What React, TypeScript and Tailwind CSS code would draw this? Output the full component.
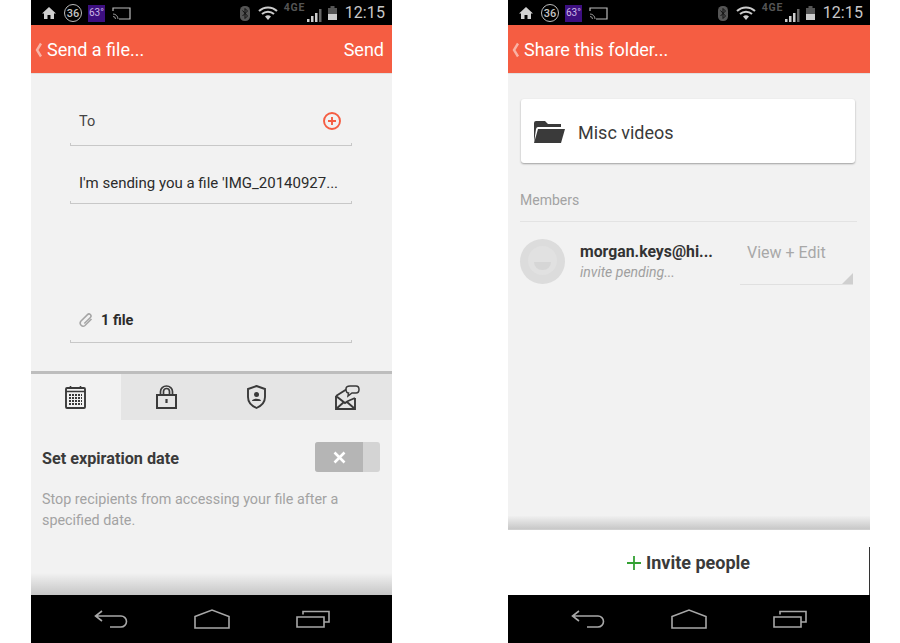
import React from "react";

function StatusBar() {
  return (
    <div className="h-[25px] bg-black flex items-center text-[#c4c4c4] shrink-0 pl-[10px] pr-[7px] pt-[1px]">
      <svg width="16" height="14" viewBox="0 0 16 14" className="mr-[7px]"><path d="M8 1 L15 7.5 H13 V13 H9.5 V9 H6.5 V13 H3 V7.5 H1 Z" fill="#d0d0d0" /></svg>
      <div className="w-[18px] h-[18px] rounded-full border border-[#bbb] flex items-center justify-center text-[11px] font-medium mr-[6px] leading-none">36</div>
      <div className="w-[17px] h-[17px] bg-[#3d0f80] text-[#c9b6e6] text-[10px] flex items-center justify-center mr-[7px] leading-none">63°</div>
      <svg width="19" height="15" viewBox="0 0 19 15" className="mr-auto"><path d="M1 5 V2 H18 V13 H7" fill="none" stroke="#bbb" strokeWidth="1.2" /><path d="M1 8 A5 5 0 0 1 6 13 M1 10.5 A2.5 2.5 0 0 1 3.5 13" fill="none" stroke="#999" strokeWidth="1" /></svg>
      <svg width="12" height="17" viewBox="0 0 12 17" className="mr-[7px]"><rect x="1" y="1" width="10" height="15" rx="4.5" fill="#555" /><path d="M3.5 5.5 L8.5 11 L6 13.5 V3.5 L8.5 6 L3.5 11" fill="none" stroke="#111" strokeWidth="1" /></svg>
      <svg width="20" height="15" viewBox="0 0 20 15" className="mr-[6px]"><path d="M1 5 A13 13 0 0 1 19 5" fill="none" stroke="#ccc" strokeWidth="2" /><path d="M4 8 A9 9 0 0 1 16 8" fill="none" stroke="#ccc" strokeWidth="2" /><path d="M7 10.5 A4.5 4.5 0 0 1 13 10.5 L10 14 Z" fill="#ccc" /></svg>
      <div className="relative w-[39px] h-[20px] mr-[4px]">
        <span className="absolute left-0 top-0 text-[10.5px] leading-none font-bold tracking-[0.8px] text-[#555]">4GE</span>
        <svg width="17" height="15" viewBox="0 0 17 15" className="absolute right-0 bottom-0"><path d="M1 14 H3.5 V11 H1 Z M5 14 H7.5 V8 H5 Z M9 14 H11.5 V5 H9 Z" fill="#ccc" /><path d="M13 14 H15.5 V1 H13 Z" fill="#666" /></svg>
      </div>
      <svg width="11" height="16" viewBox="0 0 11 16" className="mr-[7px]"><path d="M1 3 H3.5 V1 H7.5 V3 H10 V15 H1 Z" fill="#555" /><path d="M1 9 H10 V15 H1 Z" fill="#ccc" /></svg>
      <span className="text-[16px] tracking-[0.1px] leading-none text-[#c8c8c8]">12:15</span>
    </div>
  );
}

function Header({ title, action }: { title: string; action?: string }) {
  return (
    <div className="h-[49px] bg-[#f55d42] flex items-center text-white text-[18px] shrink-0 pl-[4px] pr-[8px] pt-[1px] border-b border-[#e0e0e0]">
      <svg width="8" height="16" viewBox="0 0 8 16" className="mr-[4px]"><path d="M6 1.5 L2 8 L6 14.5" fill="none" stroke="#f9b3a5" strokeWidth="2.4" /></svg>
      <span>{title}</span>
      {action && <span className="ml-auto">{action}</span>}
    </div>
  );
}

function NavBar() {
  return (
    <div className="h-[48px] bg-black flex items-center justify-center gap-[66px] shrink-0">
      <svg width="34" height="18" viewBox="0 0 34 18"><path d="M8 1 L1.5 6 L8 11 M1.5 6 H27 A5.5 5.5 0 0 1 27 17 H16" fill="none" stroke="#a8a8a8" strokeWidth="1.6" /></svg>
      <svg width="36" height="20" viewBox="0 0 36 20"><path d="M1 7.5 L18 1 L35 7.5 V19 H1 Z" fill="none" stroke="#a8a8a8" strokeWidth="1.6" /></svg>
      <svg width="34" height="18" viewBox="0 0 34 18"><path d="M1 7 H28 V17 H1 Z" fill="none" stroke="#a8a8a8" strokeWidth="1.6" /><path d="M7 4.5 V1.5 H33 V12 H28" fill="none" stroke="#a8a8a8" strokeWidth="1.6" /></svg>
    </div>
  );
}

function Underline() {
  return <div className="h-[3px] border-x border-b border-[#c8c8c8]" />;
}

function SendPhone() {
  return (
    <div className="w-[361px] h-[643px] flex flex-col shrink-0 bg-[#f2f2f2]">
      <StatusBar />
      <Header title="Send a file..." action="Send" />
      <div className="flex-1 flex flex-col min-h-0">
        <div className="pl-[39px] pr-[40px] pt-[36px]">
          <div className="h-[24px] flex items-center justify-between pl-[9px] pr-[11px] text-[14.5px] text-[#444]">
            <span>To</span>
            <svg width="18" height="18" viewBox="0 0 18 18" className="-mt-[2px]"><circle cx="9" cy="9" r="8" fill="none" stroke="#f55d42" strokeWidth="1.9" /><path d="M9 5 V13 M5 9 H13" stroke="#f55d42" strokeWidth="1.9" /></svg>
          </div>
          <div className="mt-[9px]"><Underline /></div>
          <div className="mt-[25px] h-[24px] flex items-center pl-[9px] text-[15px] text-[#2b2b2b] whitespace-nowrap">I'm sending you a file 'IMG_20140927...</div>
          <div className="mt-[6px]"><Underline /></div>
          <div className="mt-[105px] h-[24px] flex items-center pl-[8px] gap-[7px]">
            <svg width="16" height="18" viewBox="0 0 16 18"><path d="M13.5 7 L7 13.5 A3 3 0 0 1 2.8 9.3 L9.5 2.6 A2 2 0 0 1 12.4 5.4 L6.3 11.5" fill="none" stroke="#a5a5a5" strokeWidth="1.5" /></svg>
            <span className="text-[14.5px] font-bold text-[#2b2b2b]">1 file</span>
          </div>
          <div className="mt-[7px]"><Underline /></div>
        </div>
        <div className="mt-[28px] h-[3px] bg-[#bdbdbd] shrink-0" />
        <div className="h-[46px] flex shrink-0">
          <div className="w-[90px] flex items-center justify-center pr-[2px]">
            <svg width="21" height="24" viewBox="0 0 21 24"><rect x="1" y="3" width="19" height="20" rx="1" fill="none" stroke="#3a3a3a" strokeWidth="1.9" /><path d="M5.5 1 V4 M15.5 1 V4" stroke="#3a3a3a" strokeWidth="1.6" /><path d="M1 6.5 H20" stroke="#3a3a3a" strokeWidth="1.5" /><path d="M4 10 H17 M4 13 H17 M4 16 H17 M4 19 H17" stroke="#3a3a3a" strokeWidth="1.9" strokeDasharray="2 1" /></svg>
          </div>
          <div className="flex-1 bg-[#e5e5e5] flex items-center">
            <div className="w-[90px] flex justify-center">
              <svg width="21" height="24" viewBox="0 0 21 24"><rect x="1" y="10" width="19" height="13" fill="none" stroke="#3a3a3a" strokeWidth="2" /><path d="M4.5 10 V6.5 A6 5.5 0 0 1 16.5 6.5 V10 M7.5 10 V6.5 A3 3 0 0 1 13.5 6.5 V10" fill="none" stroke="#3a3a3a" strokeWidth="1.7" /><path d="M10.5 14 V18" stroke="#3a3a3a" strokeWidth="2.2" /></svg>
            </div>
            <div className="w-[91px] flex justify-center">
              <svg width="19" height="24" viewBox="0 0 19 24"><path d="M9.5 1 L18 4 V12 C18 17 14 21 9.5 23 C5 21 1 17 1 12 V4 Z" fill="none" stroke="#3a3a3a" strokeWidth="1.9" /><circle cx="9.5" cy="9.5" r="2.5" fill="#3a3a3a" /><path d="M5 16 C5 13 14 13 14 16 Z" fill="#3a3a3a" /></svg>
            </div>
            <div className="w-[90px] flex justify-center">
              <svg width="26" height="25" viewBox="0 0 26 25"><path d="M2 11 L13 4 M2 11 V24 H21 V13 M2 11 L11 18 L14 16 M2 24 L10 17 M21 24 L13 17 M21 13 L14 16" fill="none" stroke="#3a3a3a" strokeWidth="1.9" /><path d="M12 4 C12 2 14 1 16 1 H22 C24 1 25 2 25 4.5 C25 7 23.5 8 22 8 H18 L14 11 L14.5 8 C13 8 12 6 12 4 Z" fill="#e5e5e5" stroke="#3a3a3a" strokeWidth="1.5" /></svg>
            </div>
          </div>
        </div>
        <div className="flex items-center justify-between pl-[11px] pr-[12px] mt-[22px] h-[30px]">
          <span className="text-[16.2px] font-bold text-[#3a3a3a] pt-[4px]">Set expiration date</span>
          <div className="w-[65px] h-[30px] rounded-[3px] bg-[#d4d4d4] overflow-hidden">
            <div className="w-[48px] h-full bg-[#b5b5b5] flex items-center justify-center">
              <svg width="13" height="13" viewBox="0 0 13 13"><path d="M1.5 1.5 L11.5 11.5 M11.5 1.5 L1.5 11.5" stroke="#fff" strokeWidth="2.6" /></svg>
            </div>
          </div>
        </div>
        <p className="pl-[11px] pr-[20px] mt-[18px] text-[14.35px] leading-[20.5px] text-[#a3a3a3]">Stop recipients from accessing your file after a specified date.</p>
        <div className="flex-1" />
        <div className="h-[22px] shrink-0 bg-gradient-to-b from-[#f2f2f2] to-[#c6c6c6]" />
      </div>
      <NavBar />
    </div>
  );
}

function SharePhone() {
  return (
    <div className="relative w-[362px] h-[643px] flex flex-col shrink-0 bg-[#f2f2f2]">
      <StatusBar />
      <Header title="Share this folder..." />
      <div className="flex-1 flex flex-col min-h-0">
        <div className="ml-[13px] mr-[15px] mt-[25px] h-[64px] bg-white rounded-[3px] shadow-[0_1px_2px_rgba(0,0,0,0.35)] flex items-center pl-[12px] gap-[12px] pt-[2px]">
          <svg width="33" height="24" viewBox="0 0 33 24"><path d="M1 23 V3 Q1 1 3 1 H12 L15 4 H28 V7 H5 Q3.5 7 3 9 Z" fill="#3a3a3a" /><path d="M1 23 L5 9 H32 L28 23 Z" fill="#3a3a3a" /></svg>
          <span className="text-[18px] text-[#3a3a3a]">Misc videos</span>
        </div>
        <div className="mx-[12px] mt-[27px] h-[20px] flex items-center text-[14px] text-[#a3a3a3]">Members</div>
        <div className="ml-[12px] mr-[13px] mt-[11px] h-px bg-[#e3e3e3]" />
        <div className="mx-[12px] mt-[17px] flex items-start">
          <div className="relative w-[45px] h-[45px] rounded-full bg-[#dcdcdc] overflow-hidden shrink-0">
            <div className="absolute left-[8px] top-[7px] w-[29px] h-[29px] rounded-full bg-[#e1e1e1]" />
            <div className="absolute left-[14px] top-[23px] w-[17px] h-[8px] rounded-b-full bg-[#d6d6d6]" />
          </div>
          <div className="ml-[15px] w-[160px] pt-[3px]">
            <div className="text-[15.8px] font-bold text-[#333] leading-[20px] whitespace-nowrap">morgan.keys@hi...</div>
            <div className="text-[14px] italic text-[#a0a0a0] leading-[18px] mt-[1px]">invite pending...</div>
          </div>
          <div className="relative w-[113px] h-[46px] border-b border-[#e0e0e0] -mr-[4px]">
            <span className="absolute left-[7px] top-[2px] text-[16px] text-[#a8a8a8]">View + Edit</span>
            <div className="absolute right-0 bottom-0 w-0 h-0 border-l-[11px] border-l-transparent border-b-[11px] border-b-[#cfcfcf]" />
          </div>
        </div>
        <div className="flex-1" />
        <div className="h-[13px] shrink-0 bg-gradient-to-b from-[#f0f0f0] to-[#c8c8c8]" />
        <div className="h-[66px] bg-white shrink-0 flex items-center justify-center gap-[5px] pr-[1px] border-t border-[#d0d0d0]">
          <svg width="14" height="14" viewBox="0 0 14 14"><path d="M7 0 V14 M0 7 H14" stroke="#33a133" strokeWidth="1.8" /></svg>
          <span className="text-[18px] font-bold text-[#3a3a3a]">Invite people</span>
        </div>
      </div>
      <NavBar />
      <div className="absolute right-0 top-[547px] h-[48px] w-px bg-[#333]" />
    </div>
  );
}

export default function App() {
  return (
    <div className="w-[900px] h-[643px] bg-white flex gap-[116px] pl-[31px] overflow-hidden font-['Roboto',sans-serif]">
      <SendPhone />
      <SharePhone />
    </div>
  );
}
